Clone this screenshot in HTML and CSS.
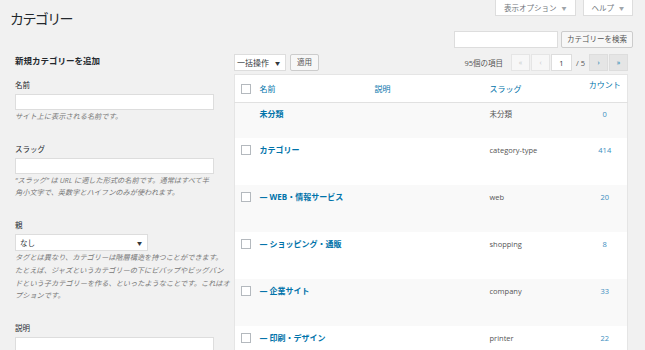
FILE: index.html
```html
<!DOCTYPE html>
<html lang="ja">
  <head>
    <meta charset="UTF-8" />
    <meta name="viewport" content="width=device-width, initial-scale=1.0" />
    <title>カテゴリー</title>
    <link rel="stylesheet" href="styles.css">
  </head>
  <body>
    <header class="page-head">
      <h1 class="page-title">カテゴリー</h1>
      <div class="head-right">
        <div class="screen-tabs">
          <button class="tab">表示オプション <span class="arrow">▼</span></button>
          <button class="tab">ヘルプ <span class="arrow">▼</span></button>
        </div>
        <div class="search-box">
          <input type="search" class="search-input" />
          <button class="btn">カテゴリーを検索</button>
        </div>
      </div>
    </header>
    <main>
      <div class="col-left">
        <h2 class="form-title">新規カテゴリーを追加</h2>
        <div class="form-field first">
          <label>名前</label>
          <input type="text" class="text-input" />
          <p class="desc">サイト上に表示される名前です。</p>
        </div>
        <div class="form-field">
          <label>スラッグ</label>
          <input type="text" class="text-input" />
          <p class="desc">“スラッグ” は URL に適した形式の名前です。通常はすべて半<br />角小文字で、英数字とハイフンのみが使われます。</p>
        </div>
        <div class="form-field">
          <label>親</label>
          <div class="select parent-select">なし <span class="arrow">▼</span></div>
          <p class="desc">タグとは異なり、カテゴリーは階層構造を持つことができます。<br />たとえば、ジャズというカテゴリーの下にビバップやビッグバン<br />ドという子カテゴリーを作る、といったようなことです。これはオ<br />プションです。</p>
        </div>
        <div class="form-field">
          <label>説明</label>
          <textarea class="text-area"></textarea>
        </div>
      </div>
      <div class="col-right">
        <div class="tablenav">
          <div class="select bulk-select">一括操作 <span class="arrow">▼</span></div>
          <button class="btn apply">適用</button>
          <div class="spacer"></div>
          <span class="num-items">95個の項目</span>
          <span class="page-btn disabled">«</span>
          <span class="page-btn disabled">‹</span>
          <input type="text" class="page-input" value="1" />
          <span class="page-total">/ 5</span>
          <a class="page-btn" href="#">›</a>
          <a class="page-btn" href="#">»</a>
        </div>
        <table class="list-table">
          <colgroup>
            <col class="c-cb" />
            <col class="c-name" />
            <col class="c-desc" />
            <col class="c-slug" />
            <col class="c-count" />
          </colgroup>
          <thead>
            <tr>
              <th class="cb"><input type="checkbox" /></th>
              <th><a href="#">名前</a></th>
              <th><a href="#">説明</a></th>
              <th><a href="#">スラッグ</a></th>
              <th class="count count-head"><a href="#">カウント</a></th>
            </tr>
          </thead>
          <tbody>
            <tr class="short">
              <td class="cb"></td>
              <td><a class="row-title" href="#">未分類</a></td>
              <td></td>
              <td class="slug">未分類</td>
              <td class="count"><a href="#">0</a></td>
            </tr>
            <tr>
              <td class="cb"><input type="checkbox" /></td>
              <td><a class="row-title" href="#">カテゴリー</a></td>
              <td></td>
              <td class="slug">category-type</td>
              <td class="count"><a href="#">414</a></td>
            </tr>
            <tr>
              <td class="cb"><input type="checkbox" /></td>
              <td><a class="row-title" href="#">— WEB・情報サービス</a></td>
              <td></td>
              <td class="slug">web</td>
              <td class="count"><a href="#">20</a></td>
            </tr>
            <tr>
              <td class="cb"><input type="checkbox" /></td>
              <td><a class="row-title" href="#">— ショッピング・通販</a></td>
              <td></td>
              <td class="slug">shopping</td>
              <td class="count"><a href="#">8</a></td>
            </tr>
            <tr>
              <td class="cb"><input type="checkbox" /></td>
              <td><a class="row-title" href="#">— 企業サイト</a></td>
              <td></td>
              <td class="slug">company</td>
              <td class="count"><a href="#">33</a></td>
            </tr>
            <tr>
              <td class="cb"><input type="checkbox" /></td>
              <td><a class="row-title" href="#">— 印刷・デザイン</a></td>
              <td></td>
              <td class="slug">printer</td>
              <td class="count"><a href="#">22</a></td>
            </tr>
          </tbody>
        </table>
      </div>
    </main>
  </body>
</html>
```

FILE: styles.css
```css
* {
  margin: 0;
  padding: 0;
  box-sizing: border-box;
}

html {
  overflow: hidden;
}

body {
  background: #f1f1f1;
  color: #444;
  font-family: "Open Sans", "Noto Sans CJK JP", sans-serif;
  font-size: 7.5px;
}

a {
  color: #0073aa;
  text-decoration: none;
}

button,
input,
textarea {
  font-family: inherit;
  font-size: inherit;
}

.arrow {
  font-size: 5px;
  vertical-align: 1px;
  margin-left: 3px;
}

/* header */
.page-head {
  display: flex;
  justify-content: space-between;
  align-items: flex-start;
  height: 48px;
}

.page-title {
  margin: 9px 0 0 10px;
  font-size: 14px;
  line-height: 20px;
  font-weight: normal;
  letter-spacing: -1.6px;
  color: #23282d;
}

.head-right {
  display: flex;
  flex-direction: column;
  align-items: flex-end;
  padding-right: 12px;
}

.screen-tabs {
  display: flex;
  gap: 7px;
}

.tab {
  height: 16px;
  padding: 0 8px;
  background: #fff;
  border: 1px solid #ddd;
  border-top: none;
  color: #72777c;
  line-height: 14px;
}

.tab .arrow {
  color: #a0a5aa;
}

.search-box {
  display: flex;
  gap: 3px;
  margin-top: 15px;
}

.search-input {
  width: 104px;
  height: 17px;
  border: 1px solid #ddd;
  background: #fff;
}

.btn {
  height: 17px;
  padding: 0 5px;
  background: #f7f7f7;
  border: 1px solid #ccc;
  border-radius: 2px;
  color: #555;
  line-height: 15px;
}

/* layout */
main {
  display: flex;
  padding: 0 17px 0 15px;
}

.col-left {
  width: 219px;
  flex-shrink: 0;
}

.col-right {
  flex: 1;
  padding-top: 6px;
}

/* add form */
.form-title {
  margin-top: 7px;
  font-size: 8.5px;
  line-height: 12px;
  color: #23282d;
}

.form-field {
  margin-top: 21px;
}

.form-field.first {
  margin-top: 13px;
}

.form-field label {
  display: block;
  margin-bottom: 3px;
  line-height: 11px;
  color: #23282d;
}

.text-input {
  display: block;
  width: 199px;
  height: 16px;
  border: 1px solid #ddd;
  background: #fff;
}

.text-area {
  display: block;
  width: 199px;
  height: 50px;
  border: 1px solid #ddd;
  background: #fff;
  resize: none;
}

.select {
  display: flex;
  align-items: center;
  justify-content: space-between;
  height: 17px;
  padding: 0 5px 0 4px;
  background: #fff;
  border: 1px solid #ddd;
  color: #32373c;
}

.parent-select {
  width: 133px;
}

.desc {
  font-size: 7.2px;
  line-height: 12.7px;
  font-style: italic;
  color: #777;
  white-space: nowrap;
}

/* table nav */
.tablenav {
  display: flex;
  align-items: center;
  height: 17px;
}

.bulk-select {
  width: 52px;
  font-size: 8px;
  padding-left: 2px;
}

.bulk-select .arrow {
  color: #32373c;
}

.apply {
  margin-left: 4px;
  width: 29px;
}

.spacer {
  flex: 1;
}

.num-items {
  margin-right: 7px;
  color: #555;
}

.page-btn {
  display: flex;
  align-items: center;
  justify-content: center;
  width: 19px;
  height: 17px;
  margin-left: 1px;
  background: #e5e5e5;
  border: 1px solid #ddd;
  color: #0073aa;
  font-size: 7px;
}

.page-btn.disabled {
  background: #f7f7f7;
  border-color: #e5e5e5;
  color: #c5c8cb;
}

.page-input {
  width: 21px;
  height: 17px;
  margin-left: 1px;
  border: 1px solid #ddd;
  background: #fff;
  text-align: center;
  color: #32373c;
}

.page-total {
  margin: 0 3px 0 4px;
  color: #555;
}

/* list table */
.list-table {
  width: 100%;
  margin-top: 3px;
  border: 1px solid #e5e5e5;
  border-collapse: collapse;
  table-layout: fixed;
  background: #fff;
}

.c-cb {
  width: 21px;
}

.c-name,
.c-desc {
  width: 115px;
}

.c-slug {
  width: 97px;
}

.list-table th {
  height: 28px;
  padding-left: 4px;
  border-bottom: 1px solid #e1e1e1;
  text-align: left;
  font-weight: normal;
  font-size: 8px;
  line-height: 10px;
}

.list-table td {
  height: 47px;
  padding: 7px 0 0 4px;
  vertical-align: top;
  line-height: 10px;
}

.list-table tr.short td {
  height: 35px;
  padding-top: 6px;
}

.list-table tbody tr:nth-child(odd) {
  background: #f9f9f9;
}

.list-table .cb {
  padding-left: 6px;
}

.list-table th.count-head {
  padding-bottom: 8px;
}

.list-table .count {
  text-align: center;
  padding-left: 0;
}

.list-table td.count a {
  color: #3a8ec0;
}

input[type="checkbox"] {
  appearance: none;
  display: block;
  width: 10px;
  height: 10px;
  border: 1px solid #b4b9be;
  background: #fff;
}

.row-title {
  font-weight: bold;
  font-size: 8px;
}

.slug {
  color: #555;
}
```
